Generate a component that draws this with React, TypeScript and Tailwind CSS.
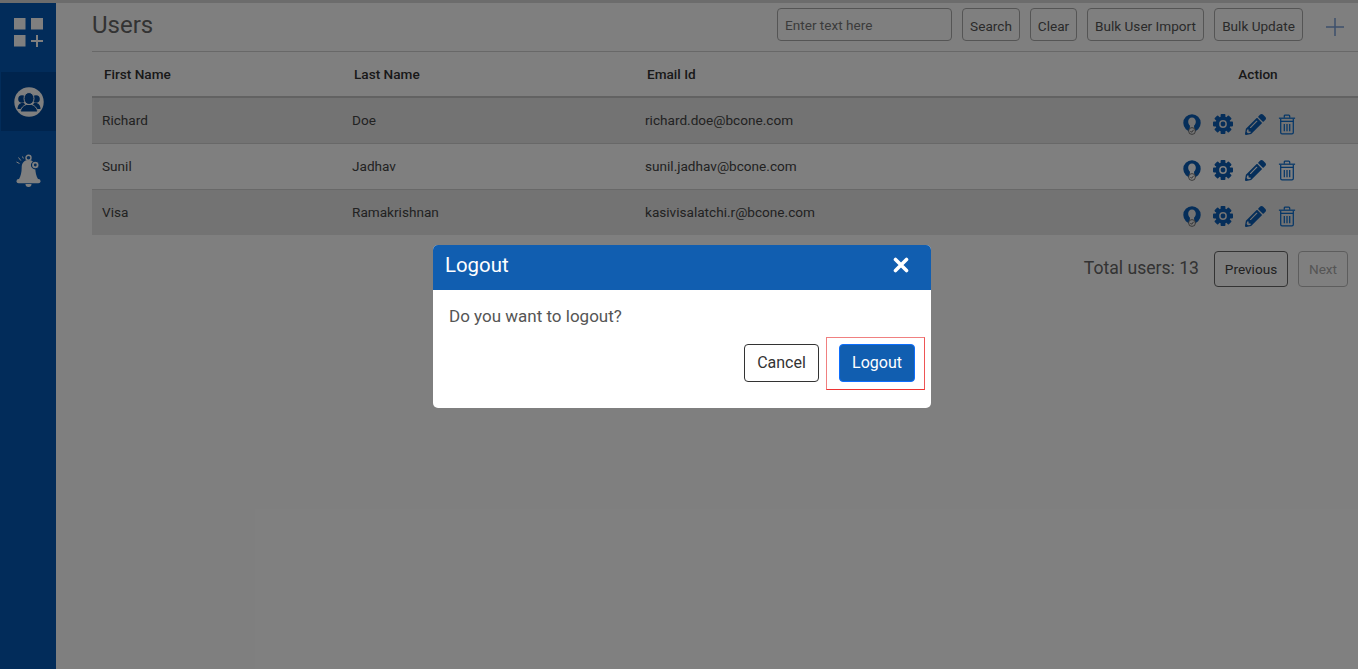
import React from "react";
import { FaPencilAlt } from "react-icons/fa";

const rows = [
  ["Richard", "Doe", "richard.doe@bcone.com"],
  ["Sunil", "Jadhav", "sunil.jadhav@bcone.com"],
  ["Visa", "Ramakrishnan", "kasivisalatchi.r@bcone.com"],
];

const ICON = "#0a5cb4";

function GridPlus() {
  return (
    <svg width="30" height="30" viewBox="0 0 30 30" fill="#fff">
      <rect x="0" y="0" width="11.500" height="11.500" />
      <rect x="17" y="0" width="12" height="11.500" />
      <rect x="0" y="17" width="11.500" height="11.500" />
      <rect x="22" y="17" width="2" height="12" />
      <rect x="17" y="22" width="12" height="2" />
    </svg>
  );
}

function People() {
  const d = "#00489a";
  return (
    <svg width="30" height="30" viewBox="0 0 30 30">
      <circle cx="15" cy="15" r="14.700" fill="#fff" />
      <g fill={d}>
        <circle cx="8" cy="12" r="3.800" />
        <circle cx="22" cy="12" r="3.800" />
        <path d="M3.500 22c0-4 2.500-6 4.500-6h2l2 3-2 3z" />
        <path d="M26.500 22c0-4-2.500-6-4.500-6h-2l-2 3 2 3z" />
      </g>
      <ellipse cx="15" cy="11.500" rx="5" ry="6" fill={d} stroke="#fff" strokeWidth="1" />
      <path d="M6.500 25c0-4 3-6.500 6-7.500h5c3 1 6 3.500 6 7.500z" fill={d} stroke="#fff" strokeWidth="1" />
    </svg>
  );
}

function Bell() {
  return (
    <svg width="26" height="34" viewBox="0 0 26 34" fill="#fff">
      <circle cx="13.500" cy="3.800" r="2.500" fill="none" stroke="#fff" strokeWidth="1.400" />
      <path d="M13.500 6c-4.500 0-6.800 3.200-6.800 7.500 0 5-1 8.500-2.700 11.500h19c-1.700-3-2.700-6.500-2.700-11.500C20.300 9.200 18 6 13.500 6z" />
      <rect x="1.500" y="25" width="24" height="4.300" rx="2.100" />
      <path d="M10.500 30h6a3 3 0 0 1-6 0z" />
      <circle cx="20.300" cy="11" r="3.800" fill="#fff" stroke="#0558b4" strokeWidth="1.200" />
      <circle cx="20.300" cy="11" r="1.400" fill="#0558b4" />
      <path d="M1.500 8l3 1.500M3.500 3.500l2.300 3M7.500 2.500l0.800 2" stroke="#fff" strokeWidth="1" />
    </svg>
  );
}

function UserKey({ bg }: { bg: string }) {
  return (
    <svg width="18" height="21" viewBox="0 0 18 21">
      <path
        fillRule="evenodd"
        fill={ICON}
        d="M9 0.300a8.700 8.700 0 1 0 0 17.400a8.700 8.700 0 1 0 0-17.400zM9 3.500C6.700 3.500 5.200 5.300 5.200 7.700C5.200 9.500 6 10.800 7 11.800L6.700 15L11.300 15L11 11.800C12 10.800 12.800 9.500 12.800 7.700C12.800 5.300 11.300 3.500 9 3.500z"
      />
      <circle cx="9" cy="17" r="3.400" fill={bg} stroke="#555" strokeWidth="0.800" />
      <path d="M7.400 17l1.200 1.300 2-2.500" stroke="#444" strokeWidth="0.800" fill="none" />
    </svg>
  );
}

function Gear({ bg }: { bg: string }) {
  const teeth = [0, 45, 90, 135, 180, 225, 270, 315];
  return (
    <svg width="20" height="20" viewBox="0 0 20 20">
      {teeth.map((a) => (
        <rect key={a} x="7.600" y="0" width="4.800" height="5" rx="0.800" fill={ICON} transform={`rotate(${a} 10 10)`} />
      ))}
      <circle cx="10" cy="10" r="7.500" fill={ICON} />
      <circle cx="10" cy="10" r="3.900" fill={bg} />
      <circle cx="10" cy="10" r="2.400" fill={ICON} />
    </svg>
  );
}

function Trash() {
  return (
    <svg width="18" height="21" viewBox="0 0 20 23" fill="none" stroke="#0c6ecf" strokeWidth="1.400">
      <path d="M1 4.500h18" />
      <path d="M7 4V2a1 1 0 0 1 1-1h4a1 1 0 0 1 1 1v2" />
      <path d="M3 8h14" />
      <path d="M3 5v15.500a1.500 1.500 0 0 0 1.500 1.500h11a1.500 1.500 0 0 0 1.500-1.500V5" />
      <path d="M7 11v8M10 11v8M13 11v8" />
    </svg>
  );
}

export default function App() {
  return (
    <div className="relative h-[669px] w-[1358px] overflow-hidden bg-white font-['Roboto',sans-serif]">
      <div className="h-[3px] bg-[#d8d8d8]" />
      <div className="flex h-[666px]">
        <aside className="flex w-[56px] shrink-0 flex-col bg-[#0558b4]">
          <div className="flex h-[69px] items-start pl-[14px] pt-[15px]">
            <GridPlus />
          </div>
          <div className="ml-px flex h-[59px] items-center justify-center bg-[#00489a] pl-px">
            <People />
          </div>
          <div className="flex justify-center pt-[23px]">
            <Bell />
          </div>
        </aside>
        <main className="flex-1 pl-[36px]">
          <div className="flex h-[49px] items-start border-b border-[#d0d0d0]">
            <h1 className="mt-[6px] text-[24px] leading-[32px] text-[#666]">Users</h1>
            <div className="ml-auto flex items-start pt-[5px] text-[13.6px] text-[#555]">
              <div className="mr-[10px] flex h-[33px] w-[175px] items-center rounded-[4px] border border-[#aaa] pl-[7px] pt-[1px] text-[#777]">
                Enter text here
              </div>
              <button className="mr-[10px] h-[33px] w-[58px] rounded-[4px] border border-[#aaa] pt-[3px]">Search</button>
              <button className="mr-[10px] h-[33px] w-[47px] rounded-[4px] border border-[#aaa] pt-[3px]">Clear</button>
              <button className="mr-[10px] h-[33px] w-[117px] rounded-[4px] border border-[#aaa] pt-[3px]">Bulk User Import</button>
              <button className="h-[33px] w-[89px] rounded-[4px] border border-[#aaa] pt-[3px]">Bulk Update</button>
              <svg className="ml-[22px] mr-[13px] mt-[10px]" width="20" height="18" viewBox="0 0 20 18" stroke="#7aa0d8" strokeWidth="1.500">
                <path d="M10 0v18M1 9h18" />
              </svg>
            </div>
          </div>
          <div className="grid h-[46px] grid-cols-[250px_293px_523px_1fr] items-center border-b-2 border-[#c4c4c4] pl-[12px] text-[13.6px] font-medium text-[#333]">
            <div>First Name</div>
            <div>Last Name</div>
            <div>Email Id</div>
            <div className="w-[176px] text-center">Action</div>
          </div>
          {rows.map((r, i) => {
            const bg = i === 1 ? "#ffffff" : "#e6e6e6";
            return (
              <div
                key={r[0]}
                className={`grid grid-cols-[250px_293px_537px_1fr] items-center pl-[10px] text-[13.6px] text-[#444] ${
                  i === 1 ? "bg-white" : "bg-[#e6e6e6]"
                } ${i === 2 ? "h-[45px]" : "h-[46px] border-b border-[#d0d0d0]"}`}
              >
                <div>{r[0]}</div>
                <div>{r[1]}</div>
                <div>{r[2]}</div>
                <div className="flex items-center pl-px pt-[7px] text-[#0a5cb4]">
                  <UserKey bg={bg} />
                  <div className="ml-[12px]">
                    <Gear bg={bg} />
                  </div>
                  <FaPencilAlt className="ml-[12px]" size={21} />
                  <div className="ml-[12px]">
                    <Trash />
                  </div>
                </div>
              </div>
            );
          })}
          <div className="flex items-center justify-end pr-[10px] pt-[16px]">
            <span className="mb-[1px] mr-[15px] text-[17.6px] text-[#666]">Total users: 13</span>
            <button className="mr-[10px] h-[36px] w-[74px] rounded-[4px] border border-[#666] text-[13.6px] text-[#444]">Previous</button>
            <button className="h-[36px] w-[50px] rounded-[4px] border border-[#bbb] text-[13.6px] text-[#aaa]">Next</button>
          </div>
        </main>
      </div>

      <div className="absolute inset-0 bg-black/50" />

      <div className="absolute left-[433px] top-[245px] h-[163px] w-[498px] overflow-hidden rounded-[5px] bg-white">
        <div className="flex h-[45px] items-center justify-between bg-[#115eb0] pb-[5px] pl-[12px] pr-[22px] text-white">
          <span className="text-[20.4px]">Logout</span>
          <svg width="16" height="16" viewBox="0 0 16 16" stroke="#fff" strokeWidth="3.600" strokeLinecap="round">
            <path d="M2.500 2.500l11 11M13.500 2.500l-11 11" />
          </svg>
        </div>
        <p className="pl-[16px] pt-[17px] text-[17px] leading-[19px] text-[#555]">Do you want to logout?</p>
        <div className="relative flex justify-end pr-[16px] pt-[18px]">
          <button className="mr-[20px] h-[38px] w-[75px] rounded-[4px] border border-[#333] text-[16px] text-[#333]">Cancel</button>
          <button className="h-[38px] w-[76px] rounded-[4px] border border-[#0d6efd] bg-[#115eb0] text-[16px] text-white">Logout</button>
          <div className="absolute left-[393px] top-[11px] h-[53px] w-[99px] border border-[#f08080] border-b-[#ee3333] border-r-[#ee5555]" />
        </div>
      </div>
    </div>
  );
}
